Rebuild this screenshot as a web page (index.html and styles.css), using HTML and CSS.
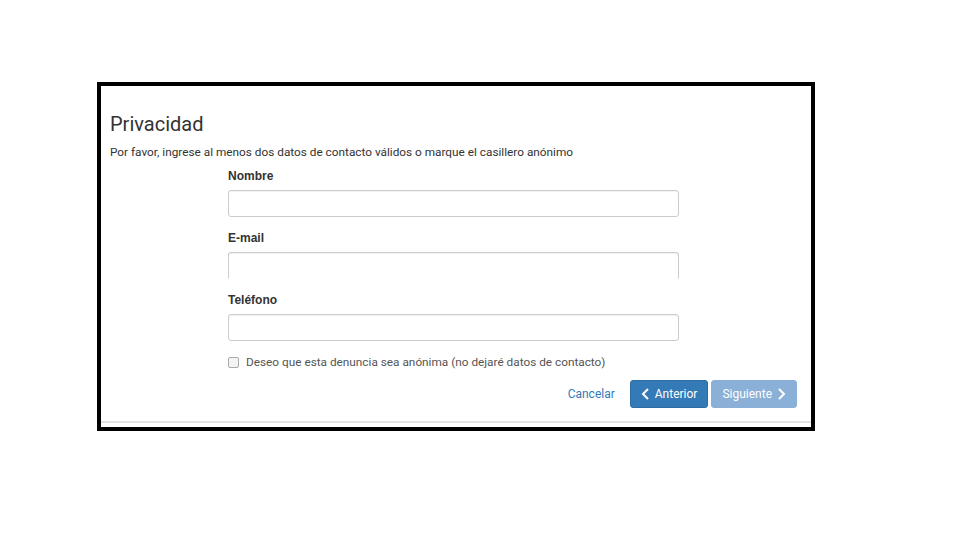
FILE: index.html
```html
<!DOCTYPE html>
<html lang="es">
<head>
    <meta charset="UTF-8">
    <meta name="viewport" content="width=device-width, initial-scale=1.0">
    <title>Privacidad</title>
    <link rel="stylesheet" href="styles.css">
</head>
<body>
    <div class="frame">
        <h1>Privacidad</h1>
        <p class="intro">Por favor, ingrese al menos dos datos de contacto válidos o marque el casillero anónimo</p>

        <div class="form">
            <label class="field-label" for="nombre">Nombre</label>
            <input type="text" id="nombre" class="field">

            <label class="field-label" for="email">E-mail</label>
            <input type="text" id="email" class="field field-open">

            <label class="field-label" for="telefono">Teléfono</label>
            <input type="text" id="telefono" class="field">

            <label class="anon">
                <span class="box"></span>
                <span>Deseo que esta denuncia sea anónima (no dejaré datos de contacto)</span>
            </label>
        </div>

        <div class="actions">
            <a class="cancel" href="#">Cancelar</a>
            <button class="btn">
                <svg width="9" height="12" viewBox="0 0 9 12"><polyline points="7,1 2,6 7,11" fill="none" stroke="#fff" stroke-width="2"/></svg>
                Anterior
            </button>
            <button class="btn btn-disabled" disabled>
                Siguiente
                <svg width="9" height="12" viewBox="0 0 9 12"><polyline points="2,1 7,6 2,11" fill="none" stroke="#fff" stroke-width="2"/></svg>
            </button>
        </div>

        <div class="rule"></div>
    </div>
</body>
</html>
```

FILE: styles.css
```css
body { margin: 0; background: #fff; font-family: Roboto, "Liberation Sans", Arial, sans-serif; color: #333; }
.frame {
    box-sizing: border-box;
    width: 718px;
    height: 349px;
    margin: 82px 0 0 97px;
    border: 4px solid #000;
    padding: 26px 0 0 0;
    display: flex;
    flex-direction: column;
}
h1 { margin: 0 0 0 9px; font-size: 20px; line-height: 24px; font-weight: 400; color: #333; }
.intro { margin: 7px 0 0 9px; font-size: 11.8px; line-height: 18px; color: #333; }

.form { width: 451px; margin: 7px 0 0 127px; display: flex; flex-direction: column; }
.field-label { font-family: "Liberation Sans", Arial, sans-serif; font-weight: bold; font-size: 12px; line-height: 16px; color: #333; }
.field {
    box-sizing: border-box;
    height: 27px;
    margin: 6px 0 13px 0;
    border: 1px solid #ccc;
    border-radius: 3px;
    box-shadow: inset 0 1px 1px rgba(0,0,0,0.06);
}
.field-open { border-bottom-color: transparent; border-bottom-left-radius: 0; border-bottom-right-radius: 0; }

.anon { display: flex; align-items: center; gap: 7px; margin-top: -1px; font-size: 11.8px; line-height: 18px; color: #555; }
.box { width: 9px; height: 9px; border: 1px solid #aaa; border-radius: 2px; background: #f4f4f4; }

.actions { display: flex; justify-content: flex-end; align-items: center; margin: 9px 14px 0 0; }
.cancel { color: #337ab7; text-decoration: none; font-size: 12px; margin-right: 12px; }
.btn {
    display: flex;
    align-items: center;
    gap: 5px;
    height: 28px;
    padding: 0 10px;
    margin-left: 3px;
    background: #337ab7;
    border: 1px solid #2e6da4;
    border-radius: 3px;
    color: #fff;
    font-family: Roboto, sans-serif;
    font-size: 12px;
}
.btn-disabled { background: #8bb0d8; border-color: #8bb0d8; }
.rule { margin-top: 13px; height: 2px; background: #e2e2e2; }
```
